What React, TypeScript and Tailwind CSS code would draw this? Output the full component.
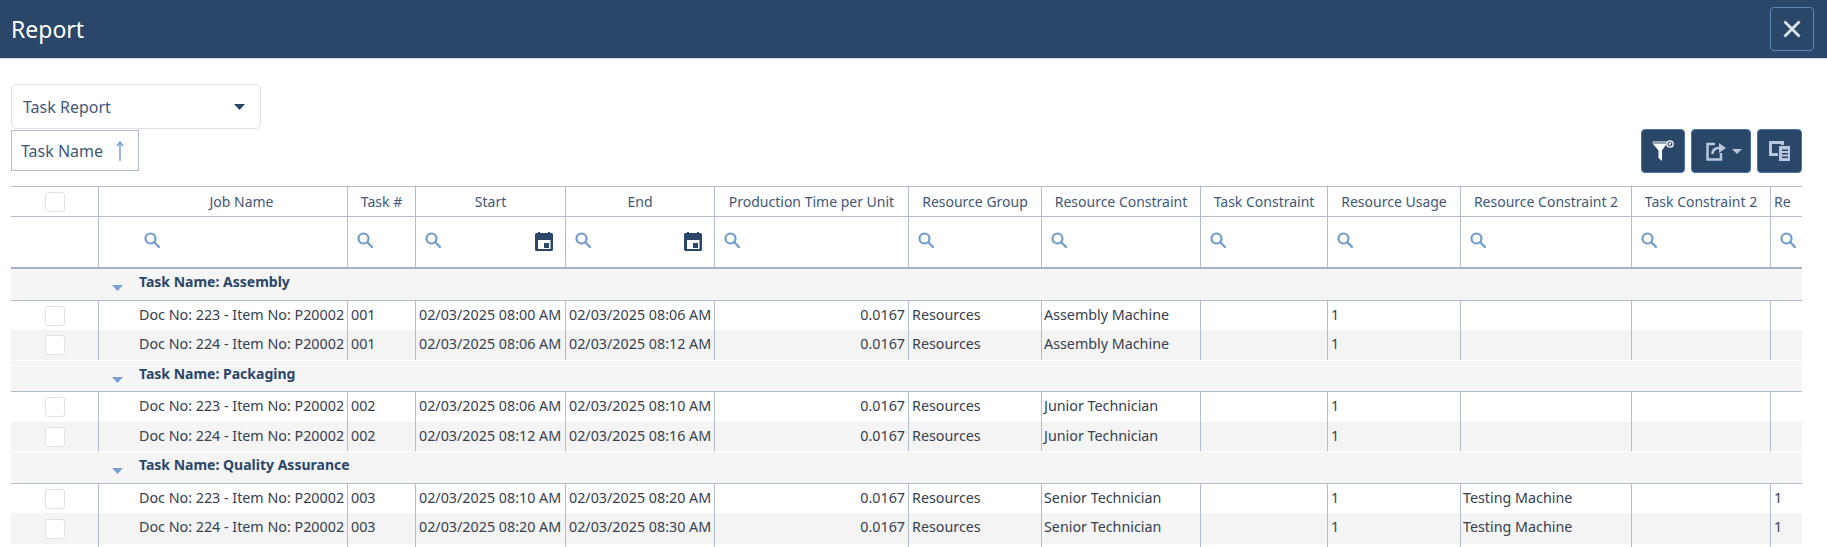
const F = "font-['Noto_Sans','Open_Sans',sans-serif]";

const cols = [
  { w: 'w-[88px]', name: '' },
  { w: 'w-[249px]', name: 'Job Name' },
  { w: 'w-[68px]', name: 'Task #' },
  { w: 'w-[150px]', name: 'Start', cal: true },
  { w: 'w-[149px]', name: 'End', cal: true },
  { w: 'w-[194px]', name: 'Production Time per Unit' },
  { w: 'w-[133px]', name: 'Resource Group' },
  { w: 'w-[159px]', name: 'Resource Constraint' },
  { w: 'w-[127px]', name: 'Task Constraint' },
  { w: 'w-[133px]', name: 'Resource Usage' },
  { w: 'w-[171px]', name: 'Resource Constraint 2' },
  { w: 'w-[139px]', name: 'Task Constraint 2' },
  { w: 'w-[31px]', name: 'Re' },
];

function Search() {
  return (
    <svg width="16" height="16" viewBox="0 0 16 16" fill="none" stroke="#6f9bcf" strokeWidth="2.2">
      <circle cx="6.500" cy="6.500" r="5" />
      <path d="M10.300 10.300 15 15" strokeLinecap="round" />
    </svg>
  );
}

function Cal() {
  return (
    <svg width="18" height="20" viewBox="0 0 18 20" fill="#2a4669">
      <path fillRule="evenodd" d="M3 0h2v1h8V0h2v1h1.500A1.500 1.500 0 0 1 18 2.500v15a1.500 1.500 0 0 1-1.500 1.500h-15A1.500 1.500 0 0 1 0 17.500v-15A1.500 1.500 0 0 1 1.500 1H3V0Zm0 8v9h12.500V8H3Z" />
      <rect x="9" y="11" width="5" height="5" />
    </svg>
  );
}

function Check() {
  return <span className="block w-5 h-5 bg-white border border-[#dfe1e4] rounded-[3px]" />;
}

type R = { job: string; task: string; start: string; end: string; con: string; c2?: string };

function Row({ r, alt, last }: { r: R; alt: boolean; last: boolean }) {
  const cells: [string, string][] = [
    ['pl-[3px]', r.start],
    ['pl-[3px]', r.end],
  ];
  return (
    <div className={`flex text-[14.3px] leading-[27px] text-[#36404e] whitespace-nowrap ${last ? 'h-[31px]' : 'h-[29.500px]'} ${alt ? 'bg-[#f4f4f4]' : 'bg-white'}`}>
      <div className={`${cols[0].w} shrink-0 border-r border-[#b3bdcf] flex items-center justify-center pt-[1px]`}><Check /></div>
      <div className={`${cols[1].w} shrink-0 border-r border-[#b3bdcf] pl-[40px] overflow-hidden`}>{r.job}</div>
      <div className={`${cols[2].w} shrink-0 border-r border-[#b3bdcf] pl-[3px]`}>{r.task}</div>
      {cells.map(([p, t], i) => (
        <div key={i} className={`${cols[3 + i].w} shrink-0 border-r border-[#b3bdcf] ${p} overflow-hidden`}>{t}</div>
      ))}
      <div className={`${cols[5].w} shrink-0 border-r border-[#b3bdcf] pr-[3px] text-right`}>0.0167</div>
      <div className={`${cols[6].w} shrink-0 border-r border-[#b3bdcf] pl-[3px]`}>Resources</div>
      <div className={`${cols[7].w} shrink-0 border-r border-[#b3bdcf] pl-[2px]`}>{r.con}</div>
      <div className={`${cols[8].w} shrink-0 border-r border-[#b3bdcf]`} />
      <div className={`${cols[9].w} shrink-0 border-r border-[#b3bdcf] pl-[3px]`}>1</div>
      <div className={`${cols[10].w} shrink-0 border-r border-[#b3bdcf] pl-[2px]`}>{r.c2 ?? ''}</div>
      <div className={`${cols[11].w} shrink-0 border-r border-[#b3bdcf]`} />
      <div className={`${cols[12].w} shrink-0 pl-[3px]`}>{r.c2 ? '1' : ''}</div>
    </div>
  );
}

function Group({ name, first }: { name: string; first: boolean }) {
  return (
    <div className={`h-[31.500px] bg-[#f5f5f5] border-b border-[#b3bdcf] flex relative ${first ? '' : 'mt-[1px]'}`}>
      <svg className="absolute left-[101px] top-[16px]" width="11" height="6" viewBox="0 0 11 6" fill="#7b9fd3"><path d="M0 0h11L5.500 6Z" /></svg>
      <span className="ml-[128px] text-[14px] font-bold leading-[26px] text-[#2a4669]">{name}</span>
    </div>
  );
}

const groups: { name: string; con: string; task: string; c2?: string; times: string[] }[] = [
  { name: 'Task Name: Assembly', con: 'Assembly Machine', task: '001', times: ['08:00', '08:06', '08:06', '08:12'] },
  { name: 'Task Name: Packaging', con: 'Junior Technician', task: '002', times: ['08:06', '08:10', '08:12', '08:16'] },
  { name: 'Task Name: Quality Assurance', con: 'Senior Technician', task: '003', c2: 'Testing Machine', times: ['08:10', '08:20', '08:20', '08:30'] },
];

export default function App() {
  return (
    <div className={`${F} w-[1827px] h-[547px] bg-white overflow-hidden`}>
      <div className="h-[59px] bg-[#2a4669] border-b border-[#d5d8dc] flex items-center justify-between pl-[11px] pr-[13px]">
        <span className="text-[23px] text-white leading-none">Report</span>
        <button className="w-[44px] h-[44px] rounded-[4px] border border-[#5b87bd] flex items-center justify-center">
          <svg width="18" height="18" viewBox="0 0 18 18" stroke="#dfe6ef" strokeWidth="2.800" fill="none"><path d="M1.500 1.500 16.500 16.500M16.500 1.500 1.500 16.500" /></svg>
        </button>
      </div>

      <div className="pl-[11px] pt-[25px]">
        <div className="w-[250px] h-[45px] border border-[#dfe1e4] rounded-[5px] flex items-center justify-between pl-[11px] pr-[15px] text-[16px] text-[#3f5878]">
          <span>Task Report</span>
          <svg width="11" height="6" viewBox="0 0 11 6" fill="#2a4669"><path d="M0 0h11L5.500 6Z" /></svg>
        </div>
      </div>

      <div className="flex justify-between items-start pl-[11px] pr-[25px] h-[56px] mt-[1px]">
        <div className="w-[128px] h-[41px] border border-[#b3bdcf] flex items-center pl-[9px] text-[16px] text-[#3f5878] gap-[13px]">
          <span>Task Name</span>
          <svg width="8" height="22" viewBox="0 0 8 22" fill="none" stroke="#7b9fd3" strokeWidth="1.500"><path d="M4 21V2M1 6l3-4 3 4" /></svg>
        </div>
        <div className="flex gap-[6px] mt-[-1px]">
          <button className="w-[44px] h-[44px] bg-[#2a4669] border border-[#4a74a8] rounded-[4px] flex items-center justify-center">
            <svg width="22" height="22" viewBox="0 0 22 22">
              <path d="M0.500 1h14.500v3H0.500Z" fill="#9aa5b5" />
              <path d="M1 4h13.500L10 10.500V21l-3.500-3v-7.500Z" fill="#fff" />
              <circle cx="18" cy="4" r="3.200" fill="none" stroke="#fff" strokeWidth="1.300" />
              <path d="M16.700 2.700l2.600 2.600M19.300 2.700l-2.600 2.600" stroke="#fff" strokeWidth="1.100" />
            </svg>
          </button>
          <button className="w-[60px] h-[44px] bg-[#2a4669] border border-[#4a74a8] rounded-[4px] flex items-center justify-center gap-[5px] pl-[6px]">
            <svg width="21" height="20" viewBox="0 0 21 20" fill="none" stroke="#b9c6da" strokeWidth="2.500">
              <path d="M9 3H1.500v15.500H15V12" />
              <path d="M6.500 13c0-4 3-6 7-6" />
              <path d="M13 2 20 7l-7 5Z" fill="#b9c6da" stroke="none" />
            </svg>
            <svg width="10" height="5" viewBox="0 0 10 5" fill="#b9c6da"><path d="M0 0h10L5 5Z" /></svg>
          </button>
          <button className="w-[45px] h-[44px] bg-[#2a4669] border border-[#4a74a8] rounded-[4px] flex items-center justify-center">
            <svg width="21" height="20" viewBox="0 0 21 20" fill="#b9c6da">
              <path d="M0 0h15v4h-3V3H3v9h6v3H0Z" />
              <path fillRule="evenodd" d="M10 5h11v15H10Zm3 3.500v1.500h6V8.500Zm0 3.500v1.500h6V12Zm0 3.500V17h6v-1.500Z" />
            </svg>
          </button>
        </div>
      </div>

      <div className="ml-[11px] w-[1791px] overflow-hidden">
        <div className="flex h-[31px] border-t border-b border-[#b3bdcf] text-[14px] leading-[28px] text-[#3f5878] whitespace-nowrap">
          {cols.map((c, i) => (
            <div key={i} className={`${c.w} shrink-0 ${i < 12 ? 'border-r border-[#b3bdcf]' : ''} ${i === 12 ? 'pl-[3px] overflow-hidden' : 'justify-center'} ${i === 1 ? 'pl-[37px]' : ''} flex items-center`}>
              {i === 0 ? <Check /> : c.name}
            </div>
          ))}
        </div>
        <div className="flex h-[52px] border-b-2 border-[#a6b2c6]">
          {cols.map((c, i) => (
            <div key={i} className={`${c.w} shrink-0 ${i < 12 ? 'border-r border-[#b3bdcf]' : ''} relative`}>
              {i > 0 && (
                <div className={`absolute top-[15px] ${i === 1 ? 'left-[45px]' : 'left-[9px]'}`}><Search /></div>
              )}
              {c.cal && <div className="absolute top-[15px] right-[12px]"><Cal /></div>}
            </div>
          ))}
        </div>
        {groups.map((g, gi) => (
          <div key={g.name}>
            <Group name={g.name} first={gi === 0} />
            {['223', '224'].map((d, i) => (
              <Row
                key={d}
                alt={i === 1}
                last={gi === 2 && i === 1}
                r={{
                  job: `Doc No: ${d} - Item No: P20002`,
                  task: g.task,
                  start: `02/03/2025 ${g.times[i * 2]} AM`,
                  end: `02/03/2025 ${g.times[i * 2 + 1]} AM`,
                  con: g.con,
                  c2: g.c2,
                }}
              />
            ))}
          </div>
        ))}
        <div className="flex h-[4px]">
          {cols.map((c, i) => (
            <div key={i} className={`${c.w} shrink-0 ${i < 12 ? 'border-r border-[#b3bdcf]' : ''}`} />
          ))}
        </div>
      </div>
    </div>
  );
}
